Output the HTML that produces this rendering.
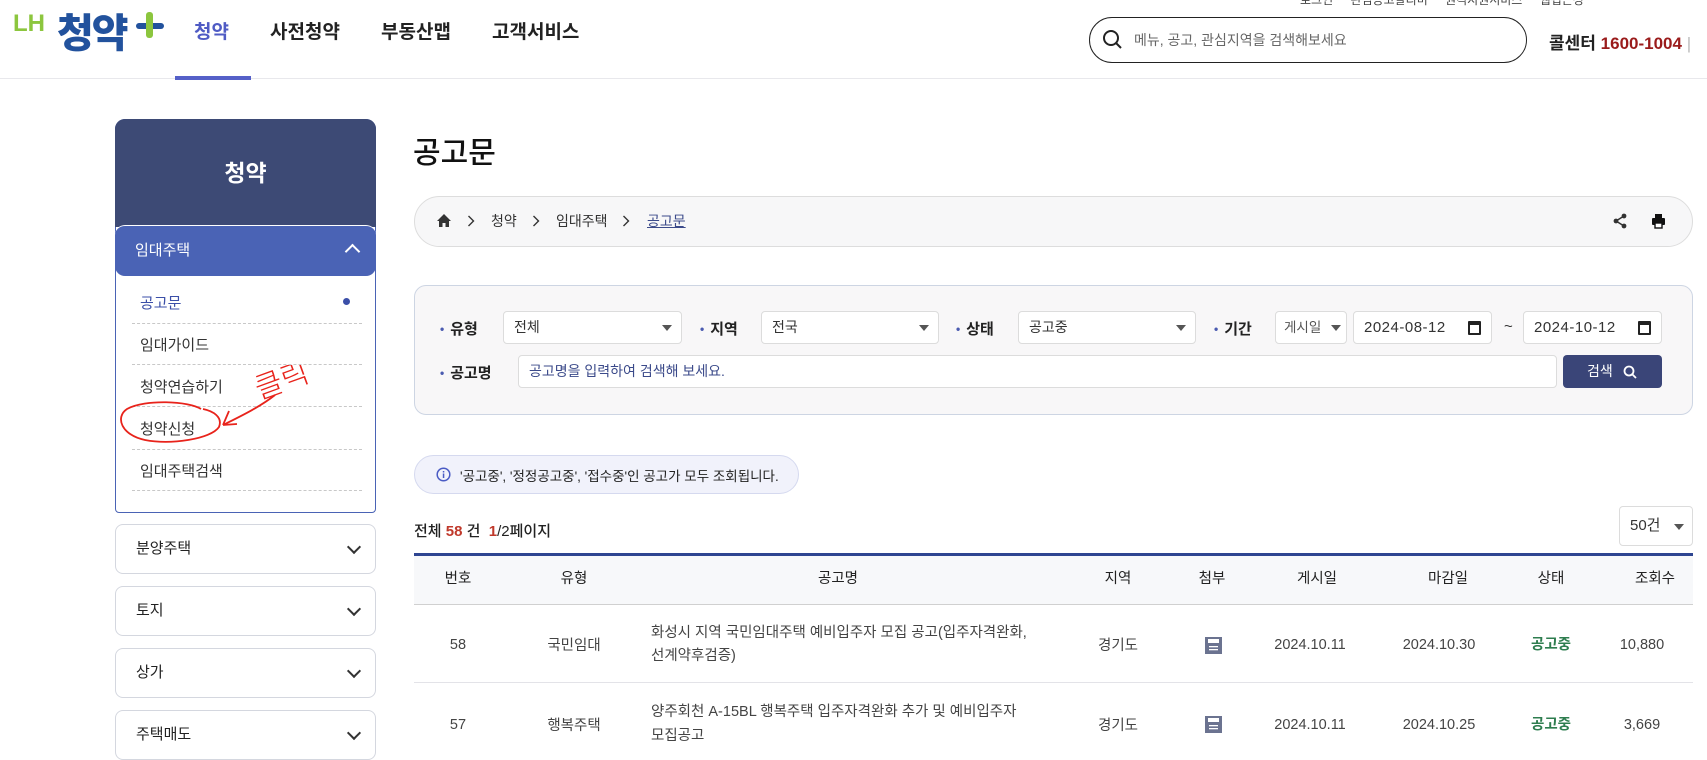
<!DOCTYPE html>
<html lang="ko"><head><meta charset="utf-8">
<style>
*{box-sizing:border-box;margin:0;padding:0}
body{width:1707px;height:755px;overflow:hidden;background:#fff;font-family:"Liberation Sans","Noto Sans CJK KR",sans-serif;color:#222;position:relative}
.a{position:absolute}
.hdr{left:0;top:0;width:1707px;height:79px;border-bottom:1px solid #e8e8ec}
.nav{font-size:19px;font-weight:700;top:17px;color:#222}
.sb{border:1px solid #d4d7df;border-radius:8px;background:#fff;left:115px;width:261px;height:50px;font-size:15px;padding:0 0 0 20px;line-height:48px}
.chev{position:absolute;right:16px;top:17px;width:10px;height:10px;border-right:2px solid #333;border-bottom:2px solid #333;transform:rotate(45deg)}
.sub{left:140px;font-size:15px;color:#333}
.sep{left:132px;width:230px;border-top:1px dashed #c8c8c8;height:0}
.lbl{font-size:15px;font-weight:700;color:#222}
.lbl:before{content:"•";color:#4a5bb0;margin-right:6px;font-size:12px;position:relative;top:-1px}
.sel{background:#fff;border:1px solid #dcdcdc;border-radius:4px;height:33px;font-size:14px;line-height:31px;padding-left:10px;color:#333}
.sel .tri{position:absolute;right:9px;top:13px;border-left:5px solid transparent;border-right:5px solid transparent;border-top:6px solid #555}
.cal{position:absolute;right:10px;top:9px;width:13px;height:14px;border:2px solid #222;border-top-width:4px;border-radius:1px}
.th{top:553px;height:52px;line-height:52px;font-size:14.5px;color:#222;text-align:center}
.td{font-size:14.5px;color:#444;text-align:center}
</style></head><body>

<!-- header -->
<div class="a hdr"></div>
<div class="a" style="left:13px;top:10px;font-size:24px;font-weight:700;color:#8cc63e">LH</div>
<div class="a" style="left:57px;top:1px;font-size:40px;font-weight:900;color:#22529d;letter-spacing:-2px">청약</div>
<div class="a" style="left:136px;top:23px;width:28px;height:6px;background:#22529d;border-radius:3px"></div>
<div class="a" style="left:146px;top:12px;width:7px;height:26px;background:#8cc63e;border-radius:3px"></div>
<div class="a nav" style="left:194px;color:#4f5bc4">청약</div>
<div class="a" style="left:175px;top:76px;width:76px;height:4px;background:#5560c8"></div>
<div class="a nav" style="left:270px">사전청약</div>
<div class="a nav" style="left:381px">부동산맵</div>
<div class="a nav" style="left:492px">고객서비스</div>
<div class="a" style="left:1300px;top:-9px;font-size:12px;color:#444;word-spacing:14px">로그인 관심공고알리미 원격지원서비스 웹접근성</div>
<div class="a" style="left:1089px;top:17px;width:438px;height:46px;border:1.5px solid #222;border-radius:23px"></div>
<svg class="a" style="left:1102px;top:29px" width="22" height="22" viewBox="0 0 22 22"><circle cx="9" cy="9" r="7" fill="none" stroke="#222" stroke-width="2"/><path d="M14 14 L19 19" stroke="#222" stroke-width="2"/></svg>
<div class="a" style="left:1134px;top:30px;font-size:14px;color:#666">메뉴, 공고, 관심지역을 검색해보세요</div>
<div class="a" style="left:1549px;top:29px;font-size:17px;font-weight:700;white-space:nowrap">콜센터 <span style="color:#9a1b1b">1600-1004</span> <span style="color:#bbb;font-weight:400">|</span></div>

<!-- sidebar -->
<div class="a" style="left:115px;top:119px;width:261px;height:394px;border:1px solid #4a63b5;border-radius:10px 10px 4px 4px;background:#fff"></div>
<div class="a" style="left:115px;top:119px;width:261px;height:108px;background:#3d4a75;border-radius:10px 10px 0 0;color:#fff;font-size:23px;font-weight:700;text-align:center;line-height:108px">청약</div>
<div class="a" style="left:115px;top:225px;width:261px;height:51px;background:#4a63b5;border-radius:10px;border-top:1px solid #fff;color:#fff;font-size:15px;line-height:49px;padding-left:20px">임대주택<div style="position:absolute;right:18px;top:20px;width:11px;height:11px;border-left:2px solid #fff;border-top:2px solid #fff;transform:rotate(45deg)"></div></div>
<div class="a sub" style="top:292px;color:#3b4fa8">공고문</div>
<div class="a" style="left:343px;top:298px;width:7px;height:7px;border-radius:50%;background:#3b4fa8"></div>
<div class="a sep" style="top:323px"></div>
<div class="a sub" style="top:334px">임대가이드</div>
<div class="a sep" style="top:364px"></div>
<div class="a sub" style="top:376px">청약연습하기</div>
<div class="a sep" style="top:406px"></div>
<div class="a sub" style="top:418px">청약신청</div>
<div class="a sep" style="top:449px"></div>
<div class="a sub" style="top:460px">임대주택검색</div>
<div class="a sep" style="top:490px"></div>
<div class="a sb" style="top:524px">분양주택<div class="chev"></div></div>
<div class="a sb" style="top:586px">토지<div class="chev"></div></div>
<div class="a sb" style="top:648px">상가<div class="chev"></div></div>
<div class="a sb" style="top:710px">주택매도<div class="chev"></div></div>

<!-- annotation -->
<svg class="a" style="left:115px;top:365px" width="220" height="90" viewBox="0 0 220 90">
<path d="M86 44 C74 36 30 34 12 44 C0 52 6 70 30 75 C56 80 96 74 104 62 C108 52 98 46 88 44" fill="none" stroke="#e8231b" stroke-width="1.8"/>
<path d="M160 30 C145 42 124 52 108 60 M108 60 L114 46 M108 60 L122 59" fill="none" stroke="#e8231b" stroke-width="1.8"/>
<text x="140" y="30" font-size="30" fill="#e8231b" font-family="Noto Sans CJK KR, sans-serif" font-weight="300" transform="rotate(-20 155 20)">클릭</text>
</svg>

<!-- title & breadcrumb -->
<div class="a" style="left:413px;top:128px;font-size:30px;font-weight:500;color:#111">공고문</div>
<div class="a" style="left:414px;top:196px;width:1279px;height:51px;background:#f7f7f8;border:1px solid #ddd;border-radius:26px"></div>
<svg class="a" style="left:436px;top:213px" width="16" height="16" viewBox="0 0 16 16"><path d="M8 1 L1 8 H3 V14 H6.5 V10 H9.5 V14 H13 V8 H15 Z" fill="#333"/></svg>
<svg class="a" style="left:467px;top:215px" width="8" height="12" viewBox="0 0 8 12"><path d="M1.5 1 L6.5 6 L1.5 11" fill="none" stroke="#333" stroke-width="1.4"/></svg>
<div class="a" style="left:491px;top:211px;font-size:14px;color:#333">청약</div>
<svg class="a" style="left:532px;top:215px" width="8" height="12" viewBox="0 0 8 12"><path d="M1.5 1 L6.5 6 L1.5 11" fill="none" stroke="#333" stroke-width="1.4"/></svg>
<div class="a" style="left:556px;top:211px;font-size:14px;color:#333">임대주택</div>
<svg class="a" style="left:622px;top:215px" width="8" height="12" viewBox="0 0 8 12"><path d="M1.5 1 L6.5 6 L1.5 11" fill="none" stroke="#333" stroke-width="1.4"/></svg>
<div class="a" style="left:647px;top:211px;font-size:14px;color:#3b4a8a;text-decoration:underline">공고문</div>
<svg class="a" style="left:1612px;top:213px" width="16" height="16" viewBox="0 0 16 16"><circle cx="12" cy="3" r="2.4" fill="#333"/><circle cx="4" cy="8" r="2.4" fill="#333"/><circle cx="12" cy="13" r="2.4" fill="#333"/><path d="M12 3 L4 8 L12 13" stroke="#333" stroke-width="1.5" fill="none"/></svg>
<svg class="a" style="left:1651px;top:214px" width="15" height="15" viewBox="0 0 15 15"><rect x="4" y="0" width="7" height="4" fill="#111"/><rect x="1" y="4" width="13" height="7" rx="1" fill="#111"/><rect x="4" y="9" width="7" height="5" fill="#fff" stroke="#111" stroke-width="1.4"/></svg>

<!-- filter -->
<div class="a" style="left:414px;top:285px;width:1279px;height:130px;background:#f8f7f8;border:1px solid #cdd5e3;border-radius:12px"></div>
<div class="a lbl" style="left:440px;top:318px">유형</div>
<div class="a sel" style="left:503px;top:311px;width:179px">전체<div class="tri"></div></div>
<div class="a lbl" style="left:700px;top:318px">지역</div>
<div class="a sel" style="left:761px;top:311px;width:178px">전국<div class="tri"></div></div>
<div class="a lbl" style="left:956px;top:318px">상태</div>
<div class="a sel" style="left:1018px;top:311px;width:178px">공고중<div class="tri"></div></div>
<div class="a lbl" style="left:1214px;top:318px">기간</div>
<div class="a sel" style="left:1275px;top:311px;width:72px;color:#555;font-size:13.5px;padding-left:8px">게시일<div class="tri" style="right:5px"></div></div>
<div class="a sel" style="left:1353px;top:311px;width:139px;font-size:15px;letter-spacing:.5px">2024-08-12<div class="cal"></div></div>
<div class="a" style="left:1504px;top:318px;font-size:15px;color:#333">~</div>
<div class="a sel" style="left:1523px;top:311px;width:139px;font-size:15px;letter-spacing:.5px">2024-10-12<div class="cal"></div></div>
<div class="a lbl" style="left:440px;top:362px">공고명</div>
<div class="a sel" style="left:518px;top:355px;width:1039px;color:#3b4a8a">공고명을 입력하여 검색해 보세요.</div>
<div class="a" style="left:1563px;top:355px;width:99px;height:33px;background:#3a4578;border-radius:4px;color:#fff;font-size:14px;line-height:33px;padding-left:24px">검색
<svg style="position:absolute;left:60px;top:10px" width="14" height="14" viewBox="0 0 14 14"><circle cx="6" cy="6" r="4.5" fill="none" stroke="#fff" stroke-width="1.8"/><path d="M9.5 9.5 L13 13" stroke="#fff" stroke-width="1.8"/></svg></div>

<!-- info pill -->
<div class="a" style="left:414px;top:455px;width:385px;height:39px;background:#f1f2fb;border:1px solid #d5d9ef;border-radius:20px"></div>
<svg class="a" style="left:436px;top:467px" width="15" height="15" viewBox="0 0 15 15"><circle cx="7.5" cy="7.5" r="6.3" fill="none" stroke="#4a5bc4" stroke-width="1.5"/><rect x="6.8" y="6.5" width="1.5" height="4.5" fill="#4a5bc4"/><rect x="6.8" y="4" width="1.5" height="1.5" fill="#4a5bc4"/></svg>
<div class="a" style="left:460px;top:465px;font-size:13.5px;color:#222">'공고중', '정정공고중', '접수중'인 공고가 모두 조회됩니다.</div>

<div class="a" style="left:414px;top:520px;font-size:15px;color:#222;font-weight:500">전체 <b style="color:#c0392b">58</b> 건 &nbsp;<b style="color:#c0392b">1</b>/2페이지</div>
<div class="a sel" style="left:1619px;top:506px;width:74px;height:40px;line-height:38px;font-size:15px">50건<div class="tri" style="top:17px;right:8px"></div></div>

<!-- table -->
<div class="a" style="left:414px;top:553px;width:1279px;height:52px;background:#f7f8fa;border-top:3px solid #2e4591;border-bottom:1px solid #d0d0d0"></div>
<div class="a th" style="left:418px;width:80px">번호</div>
<div class="a th" style="left:534px;width:80px">유형</div>
<div class="a th" style="left:778px;width:120px">공고명</div>
<div class="a th" style="left:1078px;width:80px">지역</div>
<div class="a th" style="left:1172px;width:80px">첨부</div>
<div class="a th" style="left:1277px;width:80px">게시일</div>
<div class="a th" style="left:1408px;width:80px">마감일</div>
<div class="a th" style="left:1511px;width:80px">상태</div>
<div class="a th" style="left:1615px;width:80px">조회수</div>
<div class="a" style="left:414px;top:682px;width:1279px;border-top:1px solid #e3e3e8"></div>

<div class="a td" style="left:418px;top:637px;width:80px">58</div>
<div class="a td" style="left:534px;top:634px;width:80px">국민임대</div>
<div class="a td" style="left:651px;top:622px;text-align:left;line-height:23px">화성시 지역 국민임대주택 예비입주자 모집 공고(입주자격완화,<br>선계약후검증)</div>
<div class="a td" style="left:1078px;top:634px;width:80px">경기도</div>
<svg class="a" style="left:1205px;top:637px" width="17" height="17" viewBox="0 0 17 17"><rect width="17" height="17" fill="#6b7390"/><rect x="3" y="2" width="11" height="4" fill="#fff"/><rect x="4" y="9" width="9" height="1.3" fill="#fff"/><rect x="4" y="12" width="9" height="1.3" fill="#fff"/></svg>
<div class="a td" style="left:1260px;top:637px;width:100px">2024.10.11</div>
<div class="a td" style="left:1389px;top:637px;width:100px">2024.10.30</div>
<div class="a td" style="left:1511px;top:633px;width:80px;color:#2e7d4f;font-weight:700">공고중</div>
<div class="a td" style="left:1602px;top:637px;width:80px">10,880</div>

<div class="a td" style="left:418px;top:717px;width:80px">57</div>
<div class="a td" style="left:534px;top:714px;width:80px">행복주택</div>
<div class="a td" style="left:651px;top:700px;text-align:left;line-height:24px">양주회천 A-15BL 행복주택 입주자격완화 추가 및 예비입주자<br>모집공고</div>
<div class="a td" style="left:1078px;top:714px;width:80px">경기도</div>
<svg class="a" style="left:1205px;top:716px" width="17" height="17" viewBox="0 0 17 17"><rect width="17" height="17" fill="#6b7390"/><rect x="3" y="2" width="11" height="4" fill="#fff"/><rect x="4" y="9" width="9" height="1.3" fill="#fff"/><rect x="4" y="12" width="9" height="1.3" fill="#fff"/></svg>
<div class="a td" style="left:1260px;top:717px;width:100px">2024.10.11</div>
<div class="a td" style="left:1389px;top:717px;width:100px">2024.10.25</div>
<div class="a td" style="left:1511px;top:713px;width:80px;color:#2e7d4f;font-weight:700">공고중</div>
<div class="a td" style="left:1602px;top:717px;width:80px">3,669</div>
</body></html>
